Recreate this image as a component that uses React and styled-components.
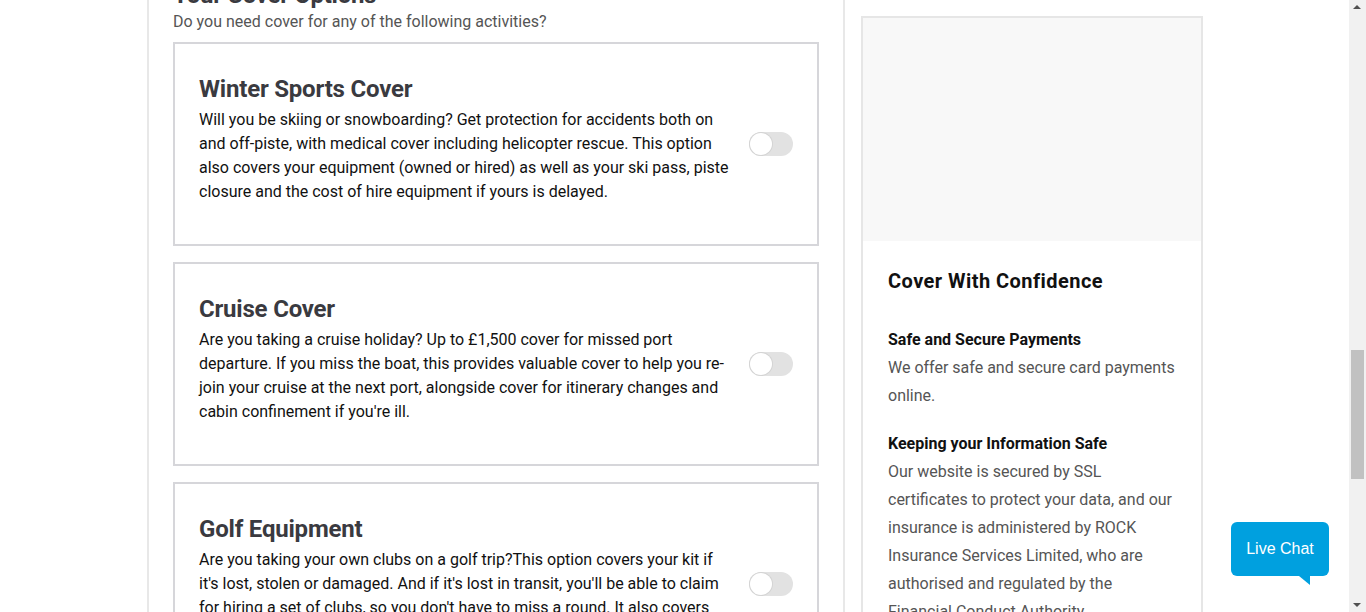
import React from "react";
import styled, { createGlobalStyle } from "styled-components";

const Global = createGlobalStyle`
  html, body { margin: 0; padding: 0; height: 612px; overflow: hidden; background: #fff; }
  body { font-family: Roboto, "Liberation Sans", sans-serif; }
  * { box-sizing: border-box; }
`;

const Page = styled.div`
  display: flex;
  height: 612px;
  overflow: hidden;
`;

const Content = styled.div`
  flex: 1;
  display: flex;
  align-items: flex-start;
  padding-left: 147px;
  overflow: hidden;
`;

const MainColumn = styled.main`
  width: 698px;
  height: 612px;
  border-left: 2px solid #e8e8e8;
  border-right: 2px solid #e8e8e8;
  padding: 0 24px;
  flex-shrink: 0;
`;

const SectionTitle = styled.h2`
  margin: -20px 0 0;
  font-size: 24px;
  line-height: 30px;
  font-weight: 700;
  letter-spacing: -0.3px;
  color: #3a3a40;
`;

const Subtitle = styled.p`
  margin: 0;
  font-size: 16px;
  line-height: 24px;
  color: #555;
`;

const CardList = styled.div`
  display: flex;
  flex-direction: column;
  gap: 16px;
  margin-top: 8px;
`;

const OptionCard = styled.section`
  display: flex;
  align-items: center;
  border: 2px solid #d6d6da;
  padding: 0 24px;
  background: #fff;
`;

const OptionText = styled.div`
  width: 530px;
  flex-shrink: 0;
  margin: 29px 0 40px;
`;

const OptionTitle = styled.h3`
  margin: 0 0 3px;
  font-size: 24px;
  line-height: 32px;
  font-weight: 700;
  letter-spacing: -0.2px;
  color: #3a3a40;
`;

const OptionBody = styled.p`
  margin: 0;
  font-size: 16px;
  line-height: 24px;
  color: #111;
`;

const Toggle = styled.span`
  margin-left: 20px;
  width: 44px;
  height: 24px;
  border-radius: 12px;
  background: #e2e2e2;
  flex-shrink: 0;
  position: relative;
  &::after {
    content: "";
    position: absolute;
    left: 1px;
    top: 1px;
    width: 22px;
    height: 22px;
    border-radius: 50%;
    background: #fff;
    box-shadow: 0 0 0 1px #d4d4d4;
  }
`;

const Sidebar = styled.aside`
  margin-left: 16px;
  margin-top: 16px;
  width: 342px;
  border: 2px solid #e6e6e6;
  flex-shrink: 0;
  background: #fff;
`;

const SidebarMedia = styled.div`
  height: 223px;
  background: #f8f8f8;
`;

const SidebarBody = styled.div`
  padding: 26px 25px 0;
`;

const SidebarTitle = styled.h3`
  margin: 0 0 31px;
  font-size: 20px;
  line-height: 28px;
  font-weight: 700;
  letter-spacing: 0.45px;
  color: #111;
`;

const InfoTitle = styled.h4`
  margin: 0;
  font-size: 16px;
  line-height: 28px;
  font-weight: 700;
  color: #111;
`;

const InfoText = styled.p`
  margin: 0 0 20px;
  font-size: 16px;
  line-height: 28px;
  color: #555;
`;

const Scrollbar = styled.div`
  width: 17px;
  height: 612px;
  background: #f1f1f1;
  flex-shrink: 0;
  position: relative;
`;

const Arrow = styled.span`
  position: absolute;
  left: 4px;
  ${(p) => (p.$down ? "bottom: 5px;" : "top: 5px;")}
  width: 0;
  height: 0;
  border-left: 4px solid transparent;
  border-right: 4px solid transparent;
  ${(p) => (p.$down ? "border-top: 4px solid #505050;" : "border-bottom: 4px solid #505050;")}
`;

const Thumb = styled.span`
  position: absolute;
  left: 2px;
  top: 350px;
  width: 13px;
  height: 129px;
  background: #c1c1c1;
`;

const LiveChat = styled.button`
  position: fixed;
  right: 37px;
  bottom: 36px;
  width: 98px;
  height: 54px;
  border: none;
  border-radius: 6px;
  background: #00a0df;
  color: #fff;
  font-family: "Liberation Sans", Arial, sans-serif;
  font-size: 16px;
  cursor: pointer;
  padding: 0;
  &::after {
    content: "";
    position: absolute;
    right: 19px;
    bottom: -9px;
    width: 0;
    height: 0;
    border-left: 11px solid transparent;
    border-top: 9px solid #00a0df;
  }
`;

const options = [
  {
    title: "Winter Sports Cover",
    body: "Will you be skiing or snowboarding? Get protection for accidents both on and off-piste, with medical cover including helicopter rescue. This option also covers your equipment (owned or hired) as well as your ski pass, piste closure and the cost of hire equipment if yours is delayed.",
  },
  {
    title: "Cruise Cover",
    body: "Are you taking a cruise holiday? Up to £1,500 cover for missed port departure. If you miss the boat, this provides valuable cover to help you re-join your cruise at the next port, alongside cover for itinerary changes and cabin confinement if you're ill.",
  },
  {
    title: "Golf Equipment",
    body: "Are you taking your own clubs on a golf trip?This option covers your kit if it's lost, stolen or damaged. And if it's lost in transit, you'll be able to claim for hiring a set of clubs, so you don't have to miss a round. It also covers green fees if you're unable to play.",
  },
];

export default function App() {
  return (
    <>
      <Global />
      <Page>
        <Content>
          <MainColumn>
            <SectionTitle>Your Cover Options</SectionTitle>
            <Subtitle>Do you need cover for any of the following activities?</Subtitle>
            <CardList>
              {options.map((o) => (
                <OptionCard key={o.title}>
                  <OptionText>
                    <OptionTitle>{o.title}</OptionTitle>
                    <OptionBody>{o.body}</OptionBody>
                  </OptionText>
                  <Toggle role="switch" aria-checked="false" />
                </OptionCard>
              ))}
            </CardList>
          </MainColumn>
          <Sidebar>
            <SidebarMedia />
            <SidebarBody>
              <SidebarTitle>Cover With Confidence</SidebarTitle>
              <InfoTitle>Safe and Secure Payments</InfoTitle>
              <InfoText>We offer safe and secure card payments online.</InfoText>
              <InfoTitle>Keeping your Information Safe</InfoTitle>
              <InfoText>
                Our website is secured by SSL certificates to protect your data, and our
                insurance is administered by ROCK Insurance Services Limited, who are
                authorised and regulated by the Financial Conduct Authority.
              </InfoText>
            </SidebarBody>
          </Sidebar>
        </Content>
        <Scrollbar>
          <Arrow />
          <Thumb />
          <Arrow $down />
        </Scrollbar>
      </Page>
      <LiveChat>Live Chat</LiveChat>
    </>
  );
}
